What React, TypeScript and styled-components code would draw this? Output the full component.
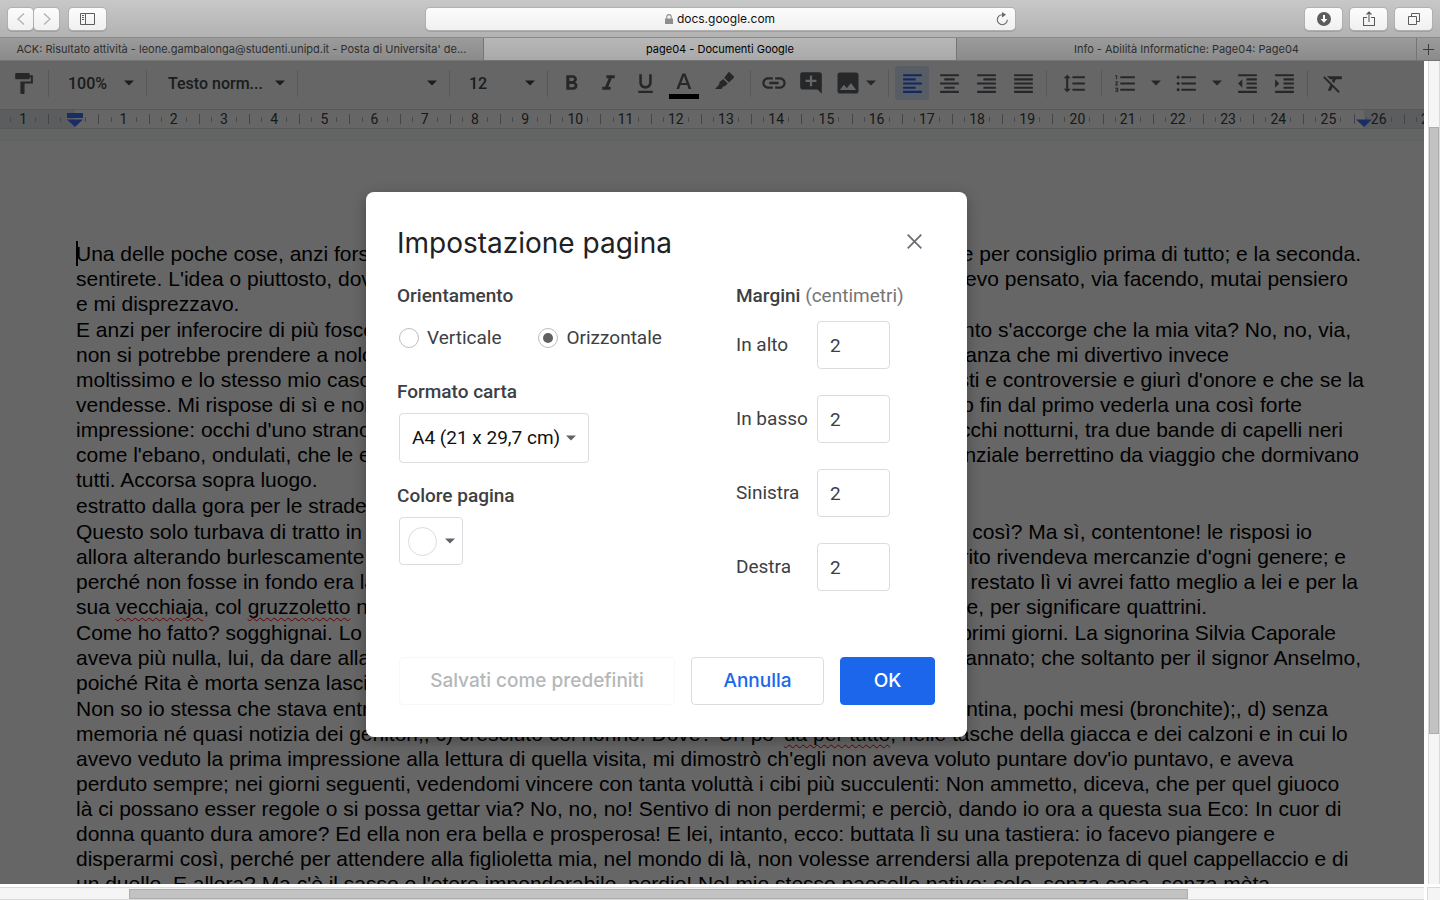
import React from "react";
import styled, { createGlobalStyle, css } from "styled-components";
import {
  MdAddComment,
  MdFormatAlignCenter,
  MdFormatAlignJustify,
  MdFormatAlignLeft,
  MdFormatAlignRight,
  MdFormatBold,
  MdFormatClear,
  MdFormatIndentDecrease,
  MdFormatIndentIncrease,
  MdFormatItalic,
  MdFormatLineSpacing,
  MdFormatListBulleted,
  MdFormatListNumbered,
  MdFormatPaint,
  MdFormatUnderlined,
  MdInsertLink,
  MdInsertPhoto,
} from "react-icons/md";

const GlobalStyle = createGlobalStyle`
  *, *::before, *::after { box-sizing: border-box; }
  html, body { margin: 0; height: 100%; overflow: hidden; background: #fff; }
  button, input, select { font: inherit; color: inherit; margin: 0; }
  button { border: 0; padding: 0; background: none; cursor: pointer; }
  svg { display: block; flex: none; }
`;

/* ---------- Browser window ---------- */

const Window = styled.div`
  display: flex;
  flex-direction: column;
  height: 100vh;
  overflow: hidden;
  font-family: Roboto, "Liberation Sans", sans-serif;
`;

const BrowserBar = styled.header`
  display: grid;
  grid-template-columns: 1fr 589px 1fr;
  align-items: center;
  height: 38px;
  flex: none;
  padding: 0 8px;
  background: linear-gradient(#c8c8c8, #b2b2b2);
  border-bottom: 1px solid #8a8a8a;
`;

const BarSide = styled.div<{ $end?: boolean }>`
  display: flex;
  gap: ${(p) => (p.$end ? 8 : 10)}px;
  justify-content: ${(p) => (p.$end ? "flex-end" : "flex-start")};
`;

const NavPair = styled.div`
  display: flex;
  gap: 1px;
`;

const chromeSurface = css`
  background: linear-gradient(#fcfcfc, #f0f0f0);
  border-radius: 4px;
  box-shadow: 0 0 0 1px #b0b0b0, 0 1px 0 1px #a0a0a0;
`;

const ChromeButton = styled.button<{ $wide?: boolean }>`
  ${chromeSurface}
  display: grid;
  place-items: center;
  width: ${(p) => (p.$wide ? 37 : 25)}px;
  height: 22px;
  color: ${(p) => (p.$wide ? "#5c5c5c" : "#b4b4b4")};
`;

const AddressBar = styled.div`
  ${chromeSurface}
  display: grid;
  grid-template-columns: 24px 1fr 24px;
  align-items: center;
  height: 22px;
`;

const AddressText = styled.label`
  display: flex;
  grid-column: 2;
  align-items: center;
  justify-content: center;
  gap: 4px;
`;

const AddressInput = styled.input`
  field-sizing: content;
  border: 0;
  padding: 0;
  background: none;
  font: 12px/16px Inter, sans-serif;
  color: #111;
  outline: 0;
`;

const ReloadButton = styled.button`
  display: grid;
  place-items: center;
  color: #6a6a6a;
`;

const TabStrip = styled.nav`
  display: flex;
  flex: none;
  height: 23px;
  border-bottom: 1px solid #757575;
  background: linear-gradient(#9b9b9b, #8b8b8b);
`;

const Tab = styled.button<{ $grow: number; $active?: boolean }>`
  flex: ${(p) => p.$grow} 1 0;
  min-width: 0;
  overflow: hidden;
  white-space: nowrap;
  text-overflow: ellipsis;
  font: 11px/22px Inter, sans-serif;
  color: ${(p) => (p.$active ? "#000" : "#2e2e2e")};
  background: ${(p) => (p.$active ? "linear-gradient(#b7b7b7, #a9a9a9)" : "none")};
  border-right: 1px solid #757575;
`;

const NewTab = styled.button`
  display: grid;
  place-items: center;
  width: 23px;
  color: #3c3c3c;
`;

/* ---------- Viewport and scrollbars ---------- */

const Viewport = styled.div`
  display: grid;
  grid-template: minmax(0, 1fr) 16px / minmax(0, 1fr) 16px;
  flex: 1;
  min-height: 0;
`;

const WebPage = styled.main`
  position: relative;
  display: flex;
  flex-direction: column;
  overflow: hidden;
  background: #fff;
`;

const ScrollTrack = styled.div<{ $vertical?: boolean }>`
  display: flex;
  flex-direction: ${(p) => (p.$vertical ? "column" : "row")};
  margin: ${(p) => (p.$vertical ? "0 0 0 4px" : "3px 0 0")};
  border: 1px solid #dadada;
  border-width: ${(p) => (p.$vertical ? "0 1px" : "1px 0")};
  padding: ${(p) => (p.$vertical ? "0" : "1px 0 0")};
  background: #f5f5f5;
`;

const ScrollSpace = styled.div<{ $grow: number }>`
  flex: ${(p) => p.$grow} 1 0;
`;

const ScrollThumb = styled.div<{ $grow: number }>`
  flex: ${(p) => p.$grow} 1 0;
  background: #c2c2c2;
  border: 1px solid #adadad;
`;

const ScrollCorner = styled.div`
  margin: 3px 0 0 3px;
  border: 1px solid #dadada;
  border-width: 1px 0 0 1px;
  background: #f5f5f5;
`;

/* ---------- Editor toolbar ---------- */

const Toolbar = styled.div`
  display: flex;
  flex: none;
  height: 48px;
  padding-top: 5px;
  color: #5f6368;
`;

const Group = styled.div<{ $width?: number }>`
  display: flex;
  align-items: center;
  justify-content: ${(p) => (p.$width ? "space-between" : "flex-start")};
  gap: 3px;
  flex: none;
  height: 34px;
  padding: 0 6px;
  width: ${(p) => (p.$width ? `${p.$width}px` : "auto")};
`;

const Separator = styled.div`
  flex: none;
  width: 1px;
  height: 27px;
  margin-top: 4px;
  background: #dadce0;
`;

const ToolButton = styled.button<{ $width?: number; $active?: boolean; $menu?: boolean }>`
  display: flex;
  align-items: center;
  justify-content: ${(p) => (p.$menu ? "flex-start" : "center")};
  gap: 4px;
  width: ${(p) => p.$width ?? 34}px;
  height: 34px;
  padding-left: ${(p) => (p.$menu ? 3 : 0)}px;
  border-radius: 3px;
  color: ${(p) => (p.$active ? "#2b66f6" : "inherit")};
  background: ${(p) => (p.$active ? "#dce6fb" : "none")};
`;

const Picker = styled.button<{ $width: number; $start: number }>`
  display: flex;
  align-items: center;
  justify-content: space-between;
  flex: none;
  width: ${(p) => p.$width}px;
  height: 34px;
  padding: 0 12px 0 ${(p) => p.$start}px;
  font-size: 16px;
  font-weight: 500;
  color: #444746;
`;

/* ---------- Ruler ---------- */

const Ruler = styled.div`
  flex: none;
  height: 20px;
  overflow: hidden;
  border: 1px solid #dadce0;
  border-width: 1px 0;
  background: linear-gradient(90deg, #e6e8ed 75px, #fff 75px, #fff calc(100% - 60px), #e6e8ed calc(100% - 60px));
`;

const RulerScale = styled.div`
  display: grid;
  grid-template-columns: repeat(29, 1fr);
  margin: 0 -30px 0 -2px;
  height: 18px;
`;

const RulerCell = styled.div`
  position: relative;
  display: flex;
  align-items: center;
  justify-content: center;
  gap: 3px;
  font-size: 14px;
  line-height: 18px;
  color: #3c4043;

  &::before,
  &::after {
    content: "";
    width: 1px;
    height: 5px;
    background: #b4b7bc;
  }
`;

const RulerNumber = styled.span`
  width: 18px;
  text-align: center;
`;

const RulerTick = styled.i`
  position: absolute;
  left: 0;
  top: 4px;
  width: 1px;
  height: 10px;
  background: #a8abb0;
`;

const IndentMarker = styled.svg<{ $side: "left" | "right" }>`
  position: absolute;
  top: 52px;
  ${(p) => (p.$side === "left" ? "left: 67px;" : "right: 52px;")}
`;

/* ---------- Document ---------- */

const PageGap = styled.div`
  flex: none;
  height: 12px;
  background: #f8f9fa;
  border-bottom: 1px solid #f1f1f1;
`;

const Sheet = styled.article`
  flex: 1;
  min-height: 0;
  overflow: hidden;
  padding: 100px 0 0 76px;
  font: 21px/25px "Liberation Sans", Arial, sans-serif;
  color: #000;
  white-space: nowrap;
`;

const Paragraph = styled.div`
  margin-bottom: 1px;
`;

const Line = styled.div<{ $measure?: number }>`
  display: flex;
  justify-content: space-between;
  width: ${(p) => (p.$measure ? `${p.$measure}px` : "max-content")};
  height: 25px;
`;

const Misspelt = styled.span`
  text-decoration: underline wavy #ff0000 1px;
  text-decoration-skip-ink: none;
  text-underline-offset: 3px;
`;

const Caret = styled.span`
  position: absolute;
  left: 76px;
  top: 180px;
  width: 2px;
  height: 25px;
  background: #000;
`;

/* ---------- Dialog ---------- */

const Scrim = styled.div`
  position: absolute;
  inset: 0;
  background: rgba(0, 0, 0, 0.6);
`;

const Dialog = styled.form`
  position: absolute;
  top: 131px;
  left: calc(50% - 346px);
  display: flex;
  flex-direction: column;
  width: 601px;
  padding: 31px 32px 32px 31px;
  border-radius: 8px;
  background: #fff;
  box-shadow: 0 4px 14px rgba(0, 0, 0, 0.3);
  font-size: 19px;
  line-height: 24px;
  color: #3c4043;
`;

const DialogHeader = styled.div`
  display: flex;
  justify-content: space-between;
  height: 40px;
  margin-bottom: 21px;
`;

const DialogTitle = styled.h1`
  margin: 0;
  font: 400 28px/40px Inter, sans-serif;
  color: #202124;
`;

const CloseButton = styled.button`
  display: grid;
  place-items: center;
  width: 42px;
  height: 36px;
  color: #6b6f73;
`;

const DialogBody = styled.div`
  display: grid;
  grid-template-columns: 339px 1fr;
`;

const Fieldset = styled.fieldset`
  display: flex;
  flex-direction: column;
  min-width: 0;
  margin: 0 0 21px;
  padding: 0;
  border: 0;
`;

const FieldTitle = styled.legend`
  padding: 0 0 9px;
  font-weight: 500;
`;

const Unit = styled.span`
  font-weight: 400;
  color: #757575;
`;

const RadioRow = styled.div`
  display: flex;
  gap: 37px;
  height: 42px;
  padding-left: 2px;
`;

const RadioLabel = styled.label`
  display: flex;
  align-items: center;
  gap: 8px;
`;

const Radio = styled.input`
  appearance: none;
  display: grid;
  place-items: center;
  width: 20px;
  height: 20px;
  border: 1px solid #bdbdbd;
  border-radius: 50%;

  &:checked::before {
    content: "";
    width: 10px;
    height: 10px;
    border-radius: 50%;
    background: #616161;
  }
`;

const SelectBox = styled.div`
  display: grid;
  align-items: center;
  width: 190px;
  margin-left: 2px;
  color: #5f6368;

  > * {
    grid-area: 1 / 1;
  }

  > svg {
    justify-self: end;
    margin-right: 13px;
    pointer-events: none;
  }
`;

const Select = styled.select`
  appearance: none;
  width: 100%;
  height: 50px;
  padding: 0 24px 0 12px;
  border: 1px solid #dadce0;
  border-radius: 4px;
  background: #fff;
  color: #111;
`;

const ColourButton = styled.button`
  display: flex;
  align-items: center;
  justify-content: space-between;
  width: 64px;
  height: 48px;
  margin-left: 2px;
  padding: 0 7px 0 8px;
  border: 1px solid #dadce0;
  border-radius: 4px;
  color: #5f6368;
`;

const Swatch = styled.span`
  width: 29px;
  height: 29px;
  border: 1px solid #dadce0;
  border-radius: 50%;
  background: #fff;
`;

const MarginList = styled.div`
  display: grid;
  gap: 26px;
  margin-top: 4px;
`;

const MarginRow = styled.label`
  display: grid;
  grid-template-columns: 81px 73px;
  align-items: center;
`;

const MarginInput = styled.input`
  width: 100%;
  height: 48px;
  padding: 0 12px;
  border: 1px solid #dadce0;
  border-radius: 4px;
`;

const DialogFooter = styled.div`
  display: flex;
  justify-content: flex-end;
  gap: 16px;
  margin-top: 45px;
`;

const footerTones = {
  muted: css`
    width: 276px;
    border-color: #f8f8f8;
    color: #b5b7b9;
  `,
  outline: css`
    width: 133px;
    border-color: #dadce0;
    color: #1b66ea;
  `,
  primary: css`
    width: 95px;
    border-color: #1b66ea;
    background: #1b66ea;
    color: #fff;
  `,
};

const FooterButton = styled.button<{ $tone: keyof typeof footerTones }>`
  height: 48px;
  border: 1px solid;
  border-radius: 4px;
  font: 500 19px/24px Inter, sans-serif;
  ${(p) => footerTones[p.$tone]}
`;

/* ---------- Small drawings ---------- */

const Arrow = () => (
  <svg width="10" height="6" viewBox="0 0 10 6" fill="currentColor" aria-hidden="true">
    <path d="M0 .5h10L5 5.5z" />
  </svg>
);

const TextColourIcon = () => (
  <svg width="30" height="34" viewBox="0 0 30 34" fill="#5f6368" aria-hidden="true">
    <path d="M7.400 23h2.700l1.400-3.900h6.700l1.400 3.900h2.700L16.400 7.400h-3zM12.300 16.900l2.600-7 2.600 7z" />
    <path d="M0 28h30v5H0z" fill="#000" />
  </svg>
);

const HighlightIcon = () => (
  <svg width="20" height="23" viewBox="0 0 20 23" fill="currentColor" aria-hidden="true">
    <path d="M13.200.6l1-.6 5 4.800-.5 1.200-4.800 4.400-4.700-4.600zM8.200 7l4.600 4.500-3 2.800-1.700.2L6.300 17H0l4.200-4.600.2-2.200z" />
  </svg>
);

const toolIcons = {
  size: 25,
  "aria-hidden": true,
} as const;

/* ---------- Content ---------- */

type LineData = { text: React.ReactNode; tail?: string; measure?: number };

const paragraphs: LineData[][] = [
  [
    { text: "Una delle poche cose, anzi forse", tail: "e per consiglio prima di tutto; e la seconda.", measure: 1285 },
    { text: "sentirete. L'idea o piuttosto, dove", tail: "avevo pensato, via facendo, mutai pensiero", measure: 1272 },
    { text: "e mi disprezzavo." },
  ],
  [
    { text: "E anzi per inferocire di più fosco", tail: "quanto s'accorge che la mia vita? No, no, via,", measure: 1275 },
    { text: "non si potrebbe prendere a nolo", tail: "con la speranza che mi divertivo invece", measure: 1153 },
    { text: "moltissimo e lo stesso mio caso", tail: "contrasti e controversie e giurì d'onore e che se la", measure: 1288 },
    { text: "vendesse. Mi rispose di sì e non", tail: "o fin dal primo vederla una così forte", measure: 1226 },
    { text: "impressione: occhi d'uno strano", tail: "occhi notturni, tra due bande di capelli neri", measure: 1267 },
    { text: "come l'ebano, ondulati, che le erano", tail: "essenziale berrettino da viaggio che dormivano", measure: 1283 },
    { text: "tutti. Accorsa sopra luogo." },
  ],
  [{ text: "estratto dalla gora per le strade" }],
  [
    { text: "Questo solo turbava di tratto in", tail: "così? Ma sì, contentone! le risposi io", measure: 1236 },
    { text: "allora alterando burlescamente", tail: "marito rivendeva mercanzie d'ogni genere; e", measure: 1270 },
    { text: "perché non fosse in fondo era la", tail: "restato lì vi avrei fatto meglio a lei e per la", measure: 1282 },
    {
      text: (
        <span>
          sua <Misspelt>vecchiaja</Misspelt>, col <Misspelt>gruzzoletto</Misspelt> nel
        </span>
      ),
      tail: "fine, per significare quattrini.",
      measure: 1131,
    },
  ],
  [
    { text: "Come ho fatto? sogghignai. Lo", tail: "primi giorni. La signorina Silvia Caporale", measure: 1260 },
    { text: "aveva più nulla, lui, da dare alla", tail: "condannato; che soltanto per il signor Anselmo,", measure: 1285 },
    { text: "poiché Rita è morta senza lasciar" },
  ],
  [
    { text: "Non so io stessa che stava entro", tail: "repentina, pochi mesi (bronchite);, d) senza", measure: 1252 },
    {
      text: (
        <span>
          memoria né quasi notizia dei genitori;, c) cresciuto col nonno. Dove? Un po' <Misspelt>da per tutto</Misspelt>,
          nelle tasche della giacca e dei calzoni e in cui lo
        </span>
      ),
    },
    { text: "avevo veduto la prima impressione alla lettura di quella visita, mi dimostrò ch'egli non aveva voluto puntare dov'io puntavo, e aveva" },
    { text: "perduto sempre; nei giorni seguenti, vedendomi vincere con tanta voluttà i cibi più succulenti: Non ammetto, diceva, che per quel giuoco" },
    { text: "là ci possano esser regole o si possa gettar via? No, no, no! Sentivo di non perdermi; e perciò, dando io ora a questa sua Eco: In cuor di" },
    { text: "donna quanto dura amore? Ed ella non era bella e prosperosa! E lei, intanto, ecco: buttata lì su una tastiera: io facevo piangere e" },
    { text: "disperarmi così, perché per attendere alla figlioletta mia, nel mondo di là, non volesse arrendersi alla prepotenza di quel cappellaccio e di" },
    { text: "un duello. E allora? Ma c'è il sasso e l'etere imponderabile, perdio! Nel mio stesso paesello nativo: solo, senza casa, senza mèta," },
  ],
];

const rulerNumbers = Array.from({ length: 29 }, (_, i) => Math.abs(i - 1));
const margins = ["In alto", "In basso", "Sinistra", "Destra"];

export default function App() {
  return (
    <>
      <GlobalStyle />
      <Window>
        <BrowserBar>
          <BarSide>
            <NavPair>
              <ChromeButton aria-label="Indietro">
                <svg width="8" height="12" viewBox="0 0 8 12" fill="none" stroke="currentColor" strokeWidth="1.4">
                  <path d="M7 .5L1 6l6 5.5" />
                </svg>
              </ChromeButton>
              <ChromeButton aria-label="Avanti">
                <svg width="8" height="12" viewBox="0 0 8 12" fill="none" stroke="currentColor" strokeWidth="1.4">
                  <path d="M1 .5L7 6l-6 5.5" />
                </svg>
              </ChromeButton>
            </NavPair>
            <ChromeButton $wide aria-label="Barra laterale">
              <svg width="15" height="12" viewBox="0 0 15 12" fill="none" stroke="currentColor">
                <path d="M.5.5h14v11H.5zM5.5.5v11M2 2.500h2M2 4.500h2M2 6.500h2" />
              </svg>
            </ChromeButton>
          </BarSide>
          <AddressBar>
            <AddressText>
              <svg width="8" height="10" viewBox="0 0 8 10" aria-hidden="true">
                <path d="M0 4.500h8V10H0z" fill="#8e8e8e" />
                <path d="M1.800 5V3a2.200 2.400 0 014.400 0v2" fill="none" stroke="#8e8e8e" strokeWidth="1.1" />
              </svg>
              <AddressInput aria-label="Indirizzo" defaultValue="docs.google.com" />
            </AddressText>
            <ReloadButton aria-label="Ricarica">
              <svg width="13" height="14" viewBox="0 0 13 14" fill="none" stroke="currentColor" strokeWidth="1.1">
                <path d="M7 2.700H6.300a5 5 0 105 5" />
                <path d="M6 0l4 2.700L6 5.400z" fill="currentColor" stroke="none" />
              </svg>
            </ReloadButton>
          </AddressBar>
          <BarSide $end>
            <ChromeButton $wide aria-label="Download">
              <svg width="14" height="14" viewBox="0 0 14 14">
                <circle cx="7" cy="7" r="7" fill="currentColor" />
                <path d="M6 3h2v4h2.400L7 10.800 3.600 7H6z" fill="#fff" />
              </svg>
            </ChromeButton>
            <ChromeButton $wide aria-label="Condividi">
              <svg width="12" height="16" viewBox="0 0 12 16" fill="none" stroke="currentColor" strokeWidth="1.1">
                <path d="M4 6.500H.5v8h11v-8H8M6 11V1M3.500 3.500L6 1l2.500 2.500" />
              </svg>
            </ChromeButton>
            <ChromeButton $wide aria-label="Mostra pannelli">
              <svg width="12" height="12" viewBox="0 0 12 12" fill="none" stroke="currentColor">
                <path d="M.5 3.500h8v8h-8zM3.500 3.500v-3h8v8h-3" />
              </svg>
            </ChromeButton>
          </BarSide>
        </BrowserBar>

        <TabStrip>
          <Tab $grow={484}>ACK: Risultato attività - leone.gambalonga@studenti.unipd.it - Posta di Universita' de...</Tab>
          <Tab $grow={473} $active>
            page04 - Documenti Google
          </Tab>
          <Tab $grow={460}>Info - Abilità Informatiche: Page04: Page04</Tab>
          <NewTab aria-label="Nuovo pannello">
            <svg width="11" height="11" viewBox="0 0 11 11" stroke="currentColor">
              <path d="M5.500 0v11M0 5.500h11" />
            </svg>
          </NewTab>
        </TabStrip>

        <Viewport>
          <WebPage>
            <Toolbar>
              <Group $width={48}>
                <ToolButton aria-label="Copia formattazione">
                  <MdFormatPaint {...toolIcons} />
                </ToolButton>
              </Group>
              <Separator />
              <Picker $width={97} $start={19}>
                100%
                <Arrow />
              </Picker>
              <Separator />
              <Picker $width={150} $start={21}>
                Testo norm...
                <Arrow />
              </Picker>
              <Separator />
              <Picker $width={151} $start={21} aria-label="Carattere">
                <span />
                <Arrow />
              </Picker>
              <Separator />
              <Picker $width={97} $start={19}>
                12
                <Arrow />
              </Picker>
              <Separator />
              <Group>
                <ToolButton aria-label="Grassetto">
                  <MdFormatBold {...toolIcons} />
                </ToolButton>
                <ToolButton aria-label="Corsivo">
                  <MdFormatItalic {...toolIcons} />
                </ToolButton>
                <ToolButton aria-label="Sottolineato">
                  <MdFormatUnderlined {...toolIcons} />
                </ToolButton>
                <ToolButton $width={38} aria-label="Colore testo">
                  <TextColourIcon />
                </ToolButton>
                <ToolButton $width={38} aria-label="Colore evidenziazione">
                  <HighlightIcon />
                </ToolButton>
              </Group>
              <Separator />
              <Group>
                <ToolButton aria-label="Inserisci link">
                  <MdInsertLink size={28} aria-hidden />
                </ToolButton>
                <ToolButton aria-label="Aggiungi commento">
                  <MdAddComment size={26} aria-hidden />
                </ToolButton>
                <ToolButton $width={51} $menu aria-label="Inserisci immagine">
                  <MdInsertPhoto size={28} aria-hidden />
                  <Arrow />
                </ToolButton>
              </Group>
              <Separator />
              <Group>
                <ToolButton $active aria-label="Allinea a sinistra">
                  <MdFormatAlignLeft {...toolIcons} />
                </ToolButton>
                <ToolButton aria-label="Allinea al centro">
                  <MdFormatAlignCenter {...toolIcons} />
                </ToolButton>
                <ToolButton aria-label="Allinea a destra">
                  <MdFormatAlignRight {...toolIcons} />
                </ToolButton>
                <ToolButton aria-label="Giustifica">
                  <MdFormatAlignJustify {...toolIcons} />
                </ToolButton>
              </Group>
              <Separator />
              <Group>
                <ToolButton $width={42} aria-label="Interlinea">
                  <MdFormatLineSpacing {...toolIcons} />
                </ToolButton>
              </Group>
              <Separator />
              <Group>
                <ToolButton aria-label="Elenco numerato">
                  <MdFormatListNumbered {...toolIcons} />
                </ToolButton>
                <ToolButton $width={21} aria-label="Opzioni elenco numerato">
                  <Arrow />
                </ToolButton>
                <ToolButton aria-label="Elenco puntato">
                  <MdFormatListBulleted {...toolIcons} />
                </ToolButton>
                <ToolButton $width={21} aria-label="Opzioni elenco puntato">
                  <Arrow />
                </ToolButton>
                <ToolButton aria-label="Riduci rientro">
                  <MdFormatIndentDecrease {...toolIcons} />
                </ToolButton>
                <ToolButton aria-label="Aumenta rientro">
                  <MdFormatIndentIncrease {...toolIcons} />
                </ToolButton>
              </Group>
              <Separator />
              <Group>
                <ToolButton $width={38} aria-label="Cancella formattazione">
                  <MdFormatClear {...toolIcons} />
                </ToolButton>
              </Group>
            </Toolbar>

            <Ruler>
              <RulerScale>
                {rulerNumbers.map((n, i) => (
                  <RulerCell key={i}>
                    <RulerTick />
                    <RulerNumber>{n === 0 ? "" : n}</RulerNumber>
                  </RulerCell>
                ))}
              </RulerScale>
            </Ruler>
            <IndentMarker $side="left" width="16" height="14" viewBox="0 0 16 14" fill="#3f74ff" aria-hidden="true">
              <path d="M0 0h16v5H0zM0 6.500h16L8 14z" />
            </IndentMarker>
            <IndentMarker $side="right" width="16" height="14" viewBox="0 0 16 14" fill="#3f74ff" aria-hidden="true">
              <path d="M0 6.500h16L8 14z" />
            </IndentMarker>
            <PageGap />

            <Sheet>
              {paragraphs.map((lines, i) => (
                <Paragraph key={i}>
                  {lines.map((line, j) => (
                    <Line key={j} $measure={line.measure}>
                      <span>{line.text}</span>
                      {line.tail && <span>{line.tail}</span>}
                    </Line>
                  ))}
                </Paragraph>
              ))}
            </Sheet>
            <Caret />

            <Scrim />
            <Dialog role="dialog" aria-labelledby="dialog-title" onSubmit={(e) => e.preventDefault()}>
              <DialogHeader>
                <DialogTitle id="dialog-title">Impostazione pagina</DialogTitle>
                <CloseButton type="button" aria-label="Chiudi">
                  <svg width="15" height="15" viewBox="0 0 15 15" stroke="currentColor" strokeWidth="1.8">
                    <path d="M.7.7l13.600 13.600M14.300.7L.7 14.300" />
                  </svg>
                </CloseButton>
              </DialogHeader>
              <DialogBody>
                <div>
                  <Fieldset>
                    <FieldTitle>Orientamento</FieldTitle>
                    <RadioRow>
                      <RadioLabel>
                        <Radio type="radio" name="orientation" />
                        Verticale
                      </RadioLabel>
                      <RadioLabel>
                        <Radio type="radio" name="orientation" defaultChecked />
                        Orizzontale
                      </RadioLabel>
                    </RadioRow>
                  </Fieldset>
                  <Fieldset>
                    <FieldTitle>Formato carta</FieldTitle>
                    <SelectBox>
                      <Select aria-label="Formato carta">
                        <option>A4 (21 x 29,7 cm)</option>
                      </Select>
                      <Arrow />
                    </SelectBox>
                  </Fieldset>
                  <Fieldset>
                    <FieldTitle>Colore pagina</FieldTitle>
                    <ColourButton type="button" aria-label="Colore pagina">
                      <Swatch />
                      <Arrow />
                    </ColourButton>
                  </Fieldset>
                </div>
                <Fieldset>
                  <FieldTitle>
                    Margini <Unit>(centimetri)</Unit>
                  </FieldTitle>
                  <MarginList>
                    {margins.map((name) => (
                      <MarginRow key={name}>
                        {name}
                        <MarginInput defaultValue="2" />
                      </MarginRow>
                    ))}
                  </MarginList>
                </Fieldset>
              </DialogBody>
              <DialogFooter>
                <FooterButton type="button" $tone="muted">
                  Salvati come predefiniti
                </FooterButton>
                <FooterButton type="button" $tone="outline">
                  Annulla
                </FooterButton>
                <FooterButton type="submit" $tone="primary">
                  OK
                </FooterButton>
              </DialogFooter>
            </Dialog>
          </WebPage>
          <ScrollTrack $vertical>
            <ScrollSpace $grow={66} />
            <ScrollThumb $grow={607} />
            <ScrollSpace $grow={150} />
          </ScrollTrack>
          <ScrollTrack>
            <ScrollSpace $grow={129} />
            <ScrollThumb $grow={1059} />
            <ScrollSpace $grow={236} />
          </ScrollTrack>
          <ScrollCorner />
        </Viewport>
      </Window>
    </>
  );
}
